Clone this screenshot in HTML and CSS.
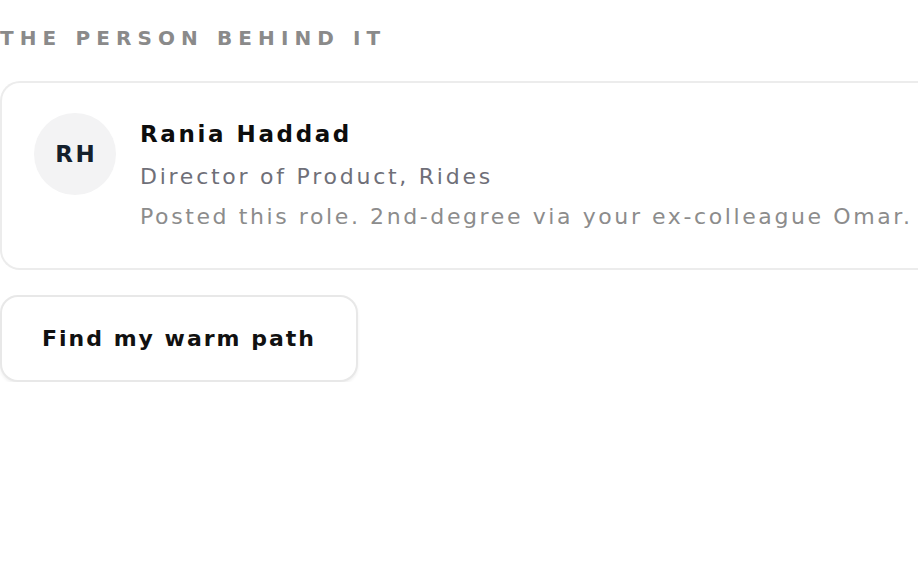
FILE: index.html
```html
<!DOCTYPE html>
<html lang="en">
<head>
<meta charset="utf-8">
<title>The person behind it</title>
<link rel="stylesheet" href="styles.css">
</head>
<body>
<section class="person">
  <h2 class="eyebrow">THE PERSON BEHIND IT</h2>
  <div class="card">
    <div class="avatar">RH</div>
    <div class="info">
      <div class="name">Rania Haddad</div>
      <div class="role">Director of Product, Rides</div>
      <div class="note">Posted this role. 2nd-degree via your ex-colleague Omar.</div>
    </div>
  </div>
  <button class="btn" type="button">Find my warm path</button>
</section>
</body>
</html>
```
FILE: styles.css
```css
html{overflow:hidden}
body{margin:0;background:#fff;font-family:"DejaVu Sans",sans-serif}
.person{display:flex;flex-direction:column;align-items:flex-start;width:918px;padding-top:26px}
.eyebrow{margin:0 0 31px 0;font-size:20px;line-height:24px;font-weight:700;letter-spacing:6.1px;color:#8a8a8a;white-space:nowrap}
.card{box-sizing:border-box;width:100%;height:189px;border:2px solid #ececec;border-right:none;border-radius:20px 0 0 20px;display:flex;align-items:flex-start;gap:24px;padding:30px 0 30px 32px}
.avatar{flex:none;width:82px;height:82px;border-radius:50%;background:#f3f3f4;color:#14202c;font-weight:700;font-size:23px;letter-spacing:2.4px;text-indent:2.4px;display:flex;align-items:center;justify-content:center}
.info{display:flex;flex-direction:column;padding-top:6px;white-space:nowrap}
.name{font-size:23px;font-weight:700;line-height:30px;color:#0d0d0d;letter-spacing:2.6px;margin-bottom:8px}
.role{font-size:22px;line-height:40px;color:#6f6f78;letter-spacing:2.75px}
.note{font-size:22px;line-height:40px;color:#8c8c8c;letter-spacing:2.6px}
.btn{margin-top:25px;box-sizing:border-box;height:87px;width:358px;border:2px solid #e8e8e8;border-radius:18px;background:#fff;box-shadow:0 2px 3px rgba(0,0,0,0.06);font-family:"DejaVu Sans",sans-serif;font-size:22px;font-weight:700;color:#111;letter-spacing:2px;padding:0;cursor:pointer}
```
